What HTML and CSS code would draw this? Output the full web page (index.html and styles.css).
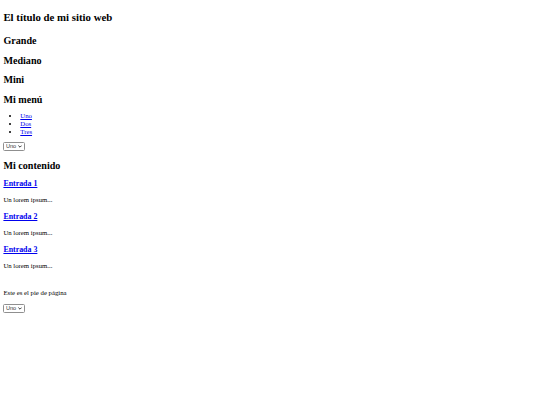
FILE: index.html
```html
<!DOCTYPE html>
<html lang="es">
<head>
<meta charset="utf-8">
<title>El título de mi sitio web</title>
<link rel="stylesheet" href="styles.css">
</head>
<body>
<header class="site-header">
  <h1>El título de mi sitio web</h1>
  <h2>Grande</h2>
  <h2>Mediano</h2>
  <h2>Mini</h2>
</header>
<nav class="site-nav">
  <h2>Mi menú</h2>
  <ul>
    <li><a href="#">Uno</a></li>
    <li><a href="#">Dos</a></li>
    <li><a href="#">Tres</a></li>
  </ul>
  <span class="picker-wrap">
    <select class="picker"><option>Uno</option><option>Dos</option><option>Tres</option></select>
    <svg class="chev" width="4" height="3" viewBox="0 0 4 3"><polyline points="0.4,0.6 2,2.2 3.6,0.6" fill="none" stroke="#222" stroke-width="0.9"/></svg>
  </span>
</nav>
<main class="content">
  <h2>Mi contenido</h2>
  <article>
    <h3><a href="#">Entrada 1</a></h3>
    <p>Un lorem ipsum...</p>
  </article>
  <article>
    <h3><a href="#">Entrada 2</a></h3>
    <p>Un lorem ipsum...</p>
  </article>
  <article>
    <h3><a href="#">Entrada 3</a></h3>
    <p>Un lorem ipsum...</p>
  </article>
</main>
<footer class="site-footer">
  <p>Este es el pie de página</p>
  <span class="picker-wrap">
    <select class="picker"><option>Uno</option><option>Dos</option><option>Tres</option></select>
    <svg class="chev" width="4" height="3" viewBox="0 0 4 3"><polyline points="0.4,0.6 2,2.2 3.6,0.6" fill="none" stroke="#222" stroke-width="0.9"/></svg>
  </span>
</footer>
</body>
</html>
```
FILE: styles.css
```css
body {
  margin: 3.4px;
  font-family: "Liberation Serif", "Times New Roman", serif;
  font-size: 6.75px;
  color: #000;
}
h1 {
  font-size: 10.8px;
  margin: 8px 0 12px;
}
h2 {
  font-size: 10.125px;
  margin: 8.4px 0;
}
.site-nav h2 {
  margin-bottom: 7px;
}
h3 {
  font-size: 7.9px;
  margin: 8.4px 0;
}
p {
  margin: 6.75px 0;
}
ul {
  margin: 6.75px 0;
  padding-left: 16.9px;
}
li {
  line-height: 8px;
}
a {
  color: #0000ee;
}
.picker-wrap {
  position: relative;
  display: block;
  width: 22px;
  height: 9px;
}
.picker {
  appearance: none;
  -webkit-appearance: none;
  display: block;
  width: 22px;
  height: 9px;
  box-sizing: border-box;
  margin: 0;
  padding: 0 0 0 1.5px;
  font-family: "Liberation Sans", Arial, sans-serif;
  font-size: 5.6px;
  line-height: 7px;
  color: #333;
  background: #fff;
  border: 1px solid #8f8f8f;
  border-radius: 1.5px;
}
.chev {
  position: absolute;
  right: 3px;
  top: 3px;
  pointer-events: none;
}
.site-footer {
  margin-top: 20px;
}
.site-footer p {
  margin-bottom: 7.5px;
}
```
